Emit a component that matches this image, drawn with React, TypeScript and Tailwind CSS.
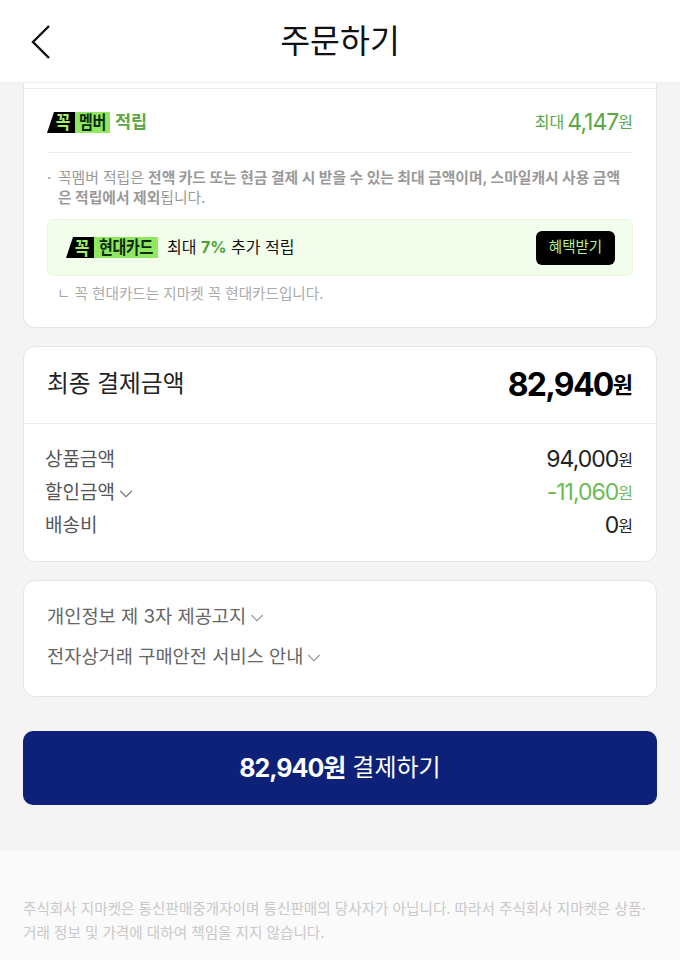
import { ChevronDown } from "lucide-react";

const font = "font-['Inter','Noto_Sans_CJK_KR',sans-serif]";

const Badge = ({ label, wide }: { label: string; wide?: boolean }) => (
  <span className="flex h-[21px] items-stretch">
    <span className="relative flex w-[28px] items-center justify-center">
      <svg className="absolute inset-0" width="28" height="21" viewBox="0 0 28 21">
        <polygon points="7,0 28,0 28,21 0,21" fill="#000" />
      </svg>
      <span className="relative inline-block scale-y-[1.15] pl-[4px] text-[16px] leading-none font-bold text-[#a4f06a]">꼭</span>
    </span>
    <span className={`flex items-center justify-center bg-[#8fe85f] text-[#0b2a10] ${wide ? "w-[64px]" : "w-[35px]"}`}>
      <span className="inline-block scale-y-[1.2] text-[15px] leading-none font-bold tracking-[-0.3px]">{label}</span>
    </span>
  </span>
);

const Won = ({ amount, className }: { amount: string; className: string }) => (
  <span className={`flex items-center ${className}`}>
    <span className="text-[23px] leading-none tracking-[-1px]">{amount}</span>
    <span className="text-[16px] leading-none">원</span>
  </span>
);

const PriceRow = ({ label, amount, color, chevron }: { label: string; amount: string; color: string; chevron?: boolean }) => (
  <div className="flex h-[33px] items-center justify-between">
    <span className="flex items-center text-[19px] leading-none text-[#555]">
      {label}
      {chevron && <ChevronDown size={22} strokeWidth={1.2} className="mt-[2px] text-[#777]" />}
    </span>
    <Won amount={amount} className={color} />
  </div>
);

const NoticeLink = ({ label }: { label: string }) => (
  <div className="flex h-[40px] items-center text-[18.7px] leading-none text-[#666]">
    {label}
    <ChevronDown size={22} strokeWidth={1.2} className="mt-[2px] text-[#999]" />
  </div>
);

export default function App() {
  return (
    <div className={`h-[960px] w-[680px] overflow-hidden bg-[#f4f4f4] ${font}`}>
      {/* Header */}
      <header className="relative flex h-[83px] items-center justify-center border-b border-[#f0f0f0] bg-white">
        <svg className="absolute top-[23px] left-[29px]" width="24" height="38" viewBox="0 0 24 38" fill="none">
          <path d="M20 3 L4 19 L20 35" stroke="#111" strokeWidth="2.4" />
        </svg>
        <h1 className="mt-[2px] text-[32.5px] leading-none font-normal text-[#111]">주문하기</h1>
      </header>

      <main className="px-[23px]">
        {/* Savings card */}
        <section className="h-[245px] rounded-b-[12px] border border-t-0 border-[#e5e5e5] bg-white px-[23px] pt-[5px]">
          <div className="-mx-[23px] h-px bg-[#ececec]" />
          <div className="flex h-[64px] items-center justify-between border-b border-[#ececec] pt-[3px]">
            <span className="flex items-center gap-[5px]">
              <Badge label="멤버" />
              <span className="text-[17.5px] leading-none font-bold text-[#5aa845]">적립</span>
            </span>
            <span className="flex items-center gap-[3px] text-[#5aa845]">
              <span className="text-[16px] leading-none">최대</span>
              <Won amount="4,147" className="text-[#5aa845]" />
            </span>
          </div>

          <div className="relative mt-[15px] pl-[11px] text-[14.8px] leading-[20px] text-[#999]">
            <span className="absolute top-0 left-0">·</span>
            꼭멤버 적립은 <b className="font-bold">전액 카드 또는 현금 결제 시 받을 수 있는 최대 금액이며, 스마일캐시 사용 금액은 적립에서 제외</b>됩니다.
          </div>

          <div className="mt-[11px] flex h-[57px] items-center justify-between rounded-[6px] border border-[#e8f8dc] bg-[#f3fdec] pr-[17px] pl-[18px]">
            <span className="flex items-center gap-[9px]">
              <Badge label="현대카드" wide />
              <span className="-mt-[1px] text-[16px] leading-none text-[#111]">
                최대 <b className="font-bold text-[#4fa33a]">7%</b> 추가 적립
              </span>
            </span>
            <button className="flex h-[34px] w-[79px] items-center justify-center rounded-[6px] bg-black text-[14.5px] leading-none text-[#b4f08a]">
              혜택받기
            </button>
          </div>

          <p className="mt-[8px] pl-[10px] text-[14.6px] leading-[20px] text-[#aaa]">ㄴ 꼭 현대카드는 지마켓 꼭 현대카드입니다.</p>
        </section>

        {/* Final amount card */}
        <section className="mt-[18px] h-[216px] rounded-[12px] border border-[#e5e5e5] bg-white">
          <div className="flex h-[77px] items-center justify-between border-b border-[#ececec] px-[23px]">
            <span className="-mt-[2px] text-[23.7px] leading-none text-[#222]">최종 결제금액</span>
            <span className="flex items-center text-black">
              <span className="text-[32px] leading-none font-bold tracking-[-1.7px]">82,940</span>
              <span className="text-[22px] leading-none font-bold">원</span>
            </span>
          </div>
          <div className="pt-[19px] pr-[23px] pl-[21px]">
            <PriceRow label="상품금액" amount="94,000" color="text-[#222]" />
            <PriceRow label="할인금액" amount="-11,060" color="text-[#6cbb55]" chevron />
            <PriceRow label="배송비" amount="0" color="text-[#222]" />
          </div>
        </section>

        {/* Notices */}
        <section className="mt-[18px] h-[117px] rounded-[12px] border border-[#e5e5e5] bg-white px-[23px] pt-[16px]">
          <NoticeLink label="개인정보 제 3자 제공고지" />
          <NoticeLink label="전자상거래 구매안전 서비스 안내" />
        </section>

        <button className="mt-[34px] flex h-[74px] w-full items-center justify-center gap-[7px] rounded-[10px] bg-[#0d2179] text-white">
          <span className="text-[25px] leading-none font-bold tracking-[-1px]">82,940원</span>
          <span className="text-[24px] leading-none">결제하기</span>
        </button>
      </main>

      {/* Footer */}
      <footer className="mt-[46px] h-[109px] bg-[#fafafa] px-[23px] pt-[46px] text-[14.6px] leading-[24px] text-[#c9c9c9]">
        주식회사 지마켓은 통신판매중개자이며 통신판매의 당사자가 아닙니다. 따라서 주식회사 지마켓은 상품·거래 정보 및 가격에 대하여 책임을 지지 않습니다.
      </footer>
    </div>
  );
}
